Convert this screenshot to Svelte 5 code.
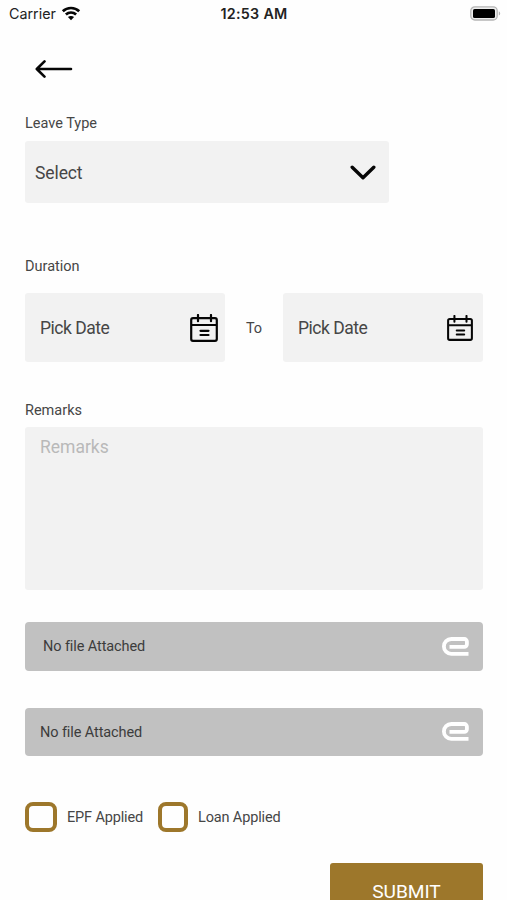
<script>
	let remarks = "";

	let attachments = [
		{ id: "first", label: "No file Attached", inset: 18 },
		{ id: "second", label: "No file Attached", inset: 15 },
	];

	let dates = [
		{ id: "from", label: "Pick Date", iconSize: 28 },
		{ id: "to", label: "Pick Date", iconSize: 26 },
	];

	let options = [
		{ id: "epf", label: "EPF Applied", checked: false },
		{ id: "loan", label: "Loan Applied", checked: false },
	];
</script>

<main>
	<div class="status">
		<div class="carrier">
			<span>Carrier</span>
			<svg width="20" height="15" viewBox="0 0 20 15">
				<path d="M1.8 5.2C6.3 .9 13.7 .9 18.2 5.2" />
				<path d="M4.9 8.5c2.9-2.7 7.3-2.7 10.2 0" />
				<path class="dot" d="M10 14.2 6.9 11.1c1.7-1.6 4.5-1.6 6.2 0z" />
			</svg>
		</div>
		<time>12:53 AM</time>
		<svg class="battery" width="31" height="15" viewBox="0 0 31 15">
			<rect class="shell" x=".8" y=".8" width="26.4" height="13.2" rx="4" />
			<rect x="3" y="3" width="22" height="9" rx="1.6" />
			<path class="tip" d="M28.8 5.2c1.9.9 1.9 3.5 0 4.4z" />
		</svg>
	</div>

	<button class="back" aria-label="Back">
		<svg width="38" height="20" viewBox="0 0 38 20">
			<path d="M36 10H2M9.5 2.4 1.8 10l7.7 7.6" />
		</svg>
	</button>

	<form>
		<h2 class="leave">Leave Type</h2>
		<button type="button" class="select">
			<span>Select</span>
			<svg width="26" height="16" viewBox="0 0 26 16">
				<path d="M2.2 2.2 13 12.8 23.8 2.2" />
			</svg>
		</button>

		<h2 class="duration">Duration</h2>
		<div class="dates">
			{#each dates as date, i (date.id)}
				{#if i > 0}
					<span class="to">To</span>
				{/if}
				<button type="button" class="date {date.id}-date">
					<span>{date.label}</span>
					<svg width={date.iconSize} height={date.iconSize} viewBox="0 0 28 28">
						<path d="M3 4.2h22a1.8 1.8 0 0 1 1.8 1.8v19a1.8 1.8 0 0 1-1.8 1.8H3A1.8 1.8 0 0 1 1.2 25V6A1.8 1.8 0 0 1 3 4.2zM1.2 11h25.6M8 1v6.2M21 1v6.2M10.5 16.8h8M10.5 21h8" />
					</svg>
				</button>
			{/each}
		</div>

		<h2 class="remarks">Remarks</h2>
		<textarea placeholder="Remarks" bind:value={remarks}></textarea>

		<div class="files">
			{#each attachments as file (file.id)}
				<button type="button" class="file" style="padding-left: {file.inset}px">
					<span>{file.label}</span>
					<svg width="27" height="19" viewBox="0 0 27 19">
						<path d="M26.5 16.8H9.3a7.4 7.4 0 0 1 0-14.8h13a2.6 2.6 0 0 1 2.6 2.6v2.6a2.6 2.6 0 0 1-2.6 2.6H7.5" />
					</svg>
				</button>
			{/each}
		</div>

		<div class="options">
			{#each options as option (option.id)}
				<label class={option.id}>
					<input type="checkbox" bind:checked={option.checked} />
					<span>{option.label}</span>
				</label>
			{/each}
		</div>

		<button type="button" class="submit">SUBMIT</button>
	</form>
</main>

<style>
	:global(body) {
		margin: 0;
		background: #fefefe;
	}

	main {
		height: 900px;
		overflow: hidden;
		font-family: Roboto, sans-serif;
		color: #464646;
		background: #fefefe;
	}

	button {
		border: 0;
		padding: 0;
		font: inherit;
		color: inherit;
		text-align: left;
	}

	svg {
		display: block;
		flex: none;
		fill: none;
		stroke: #060606;
		stroke-linecap: round;
		stroke-linejoin: round;
	}

	.status {
		display: grid;
		grid-template-columns: 1fr auto 1fr;
		align-items: center;
		height: 27px;
		padding: 0 6px 0 9px;
		font-family: Inter, sans-serif;
		font-size: 14.3px;
		color: #222;
	}

	.status svg {
		stroke-width: 2.7;
		stroke-linecap: butt;
	}

	.carrier {
		display: flex;
		align-items: center;
		gap: 5px;
	}

	.carrier .dot {
		fill: #060606;
		stroke: none;
	}

	time {
		margin-right: 2px;
		font-weight: 600;
		letter-spacing: 0.3px;
	}

	.status .battery {
		justify-self: end;
		fill: #000;
		stroke: none;
	}

	.battery .shell {
		fill: #eee;
		stroke: #b5b5b5;
		stroke-width: 1.3;
	}

	.battery .tip {
		fill: #b5b5b5;
	}

	.back {
		display: block;
		margin: 32px 0 0 34.5px;
		background: none;
	}

	.back svg {
		stroke-width: 2.6;
	}

	form {
		display: flex;
		flex-direction: column;
		padding: 0 24px 0 25px;
	}

	h2 {
		margin: 0;
		font-size: 14.5px;
		font-weight: 400;
		line-height: 20px;
	}

	.leave {
		margin-top: 35px;
	}

	.select,
	.date,
	.file {
		display: flex;
		align-items: center;
		justify-content: space-between;
		box-sizing: border-box;
		border-radius: 3px;
		background: #f2f2f2;
	}

	.select {
		width: 364px;
		height: 62px;
		margin-top: 7px;
		padding: 2px 13px 0 10px;
		font-size: 17.5px;
		letter-spacing: -0.1px;
	}

	.select svg {
		stroke-width: 3.4;
	}

	.duration {
		margin-top: 54px;
	}

	.dates {
		display: flex;
		align-items: center;
		justify-content: space-between;
		height: 69px;
		margin-top: 16px;
	}

	.date {
		width: 200px;
		height: 69px;
		padding: 1px 7px 0 15px;
		font-size: 17.5px;
		letter-spacing: -0.5px;
	}

	.to-date {
		padding-right: 10px;
	}

	.date svg {
		stroke-width: 2.2;
	}

	.to {
		padding-top: 2px;
		font-size: 14.5px;
	}

	.remarks {
		margin-top: 39px;
	}

	textarea {
		box-sizing: border-box;
		height: 163px;
		margin: 6px 0 0;
		padding: 10px 15px;
		border: 0;
		border-radius: 3px;
		outline: 0;
		resize: none;
		font: 17.5px/20px Roboto, sans-serif;
		color: #464646;
		background: #f2f2f2;
	}

	textarea::placeholder {
		color: #b9b9b9;
	}

	.files {
		display: flex;
		flex-direction: column;
		gap: 37px;
		margin-top: 32px;
	}

	.file {
		height: 48.5px;
		padding: 0 14.5px 0 0;
		border-radius: 4px;
		font-size: 14.5px;
		letter-spacing: -0.1px;
		color: #3c3c3c;
		background: #c1c1c1;
	}

	.file svg {
		stroke: #fff;
		stroke-width: 3.8;
		stroke-linecap: butt;
	}

	.file span {
		padding-top: 1px;
	}

	.options {
		display: flex;
		gap: 15px;
		height: 30px;
		margin-top: 45.5px;
	}

	label {
		display: flex;
		align-items: center;
		gap: 10px;
		font-size: 14.5px;
		letter-spacing: -0.15px;
	}

	label span {
		padding-top: 2px;
	}

	input {
		appearance: none;
		box-sizing: border-box;
		width: 32px;
		height: 30px;
		margin: 0;
		border: 4px solid #9d772b;
		border-radius: 8px;
	}

	.loan input {
		width: 30px;
	}

	.submit {
		align-self: flex-end;
		width: 153px;
		height: 57px;
		margin-top: 31px;
		border-radius: 3px;
		font-size: 19.2px;
		line-height: 17px;
		letter-spacing: -0.1px;
		text-align: center;
		color: #fff;
		background: #9d772b;
	}
</style>
